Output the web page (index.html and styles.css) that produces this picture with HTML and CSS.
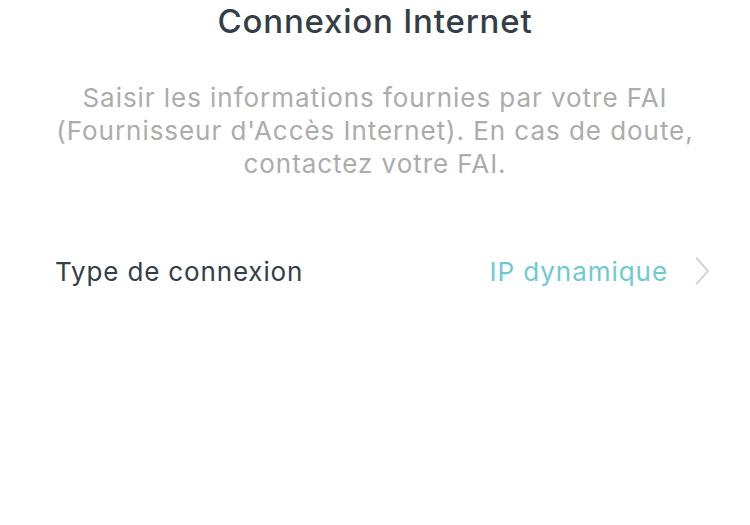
FILE: index.html
```html
<!DOCTYPE html>
<html lang="fr">
<head>
<meta charset="utf-8">
<link rel="stylesheet" href="styles.css">
</head>
<body>
<main class="page">
  <h1 class="title">Connexion Internet</h1>
  <p class="desc">Saisir les informations fournies par votre FAI<br>(Fournisseur d'Accès Internet). En cas de doute,<br>contactez votre FAI.</p>
  <div class="row">
    <span class="label">Type de connexion</span>
    <span class="value">IP dynamique</span>
    <svg class="chev" width="16" height="30" viewBox="0 0 16 30"><path d="M2 1.5 L14 15 L2 28.5" fill="none" stroke="#c9c9c9" stroke-width="1.6"/></svg>
  </div>
</main>
</body>
</html>
```
FILE: styles.css
```css
html, body { margin: 0; padding: 0; background: #fff; }
body { font-family: Inter, "Noto Sans", sans-serif; width: 750px; height: 525px; overflow: hidden; }
.page { display: flex; flex-direction: column; align-items: center; }
.title { margin: 0; padding-top: 2px; font-size: 33px; font-weight: 500; color: #353e46; line-height: 38px; letter-spacing: 0.8px; }
.desc { margin: 41px 0 0; text-align: center; font-size: 26px; line-height: 33px; color: #acacac; font-weight: 400; letter-spacing: 0.95px; }
.row { margin-top: 71px; width: 100%; box-sizing: border-box; padding: 0 40px 0 55px; display: flex; align-items: center; height: 40px; }
.label { font-size: 26px; color: #353e46; flex: 1; letter-spacing: 0.85px; }
.value { font-size: 26px; color: #6ec9d5; letter-spacing: 0.95px; margin-right: 26px; }
.chev { display: block; }
```
